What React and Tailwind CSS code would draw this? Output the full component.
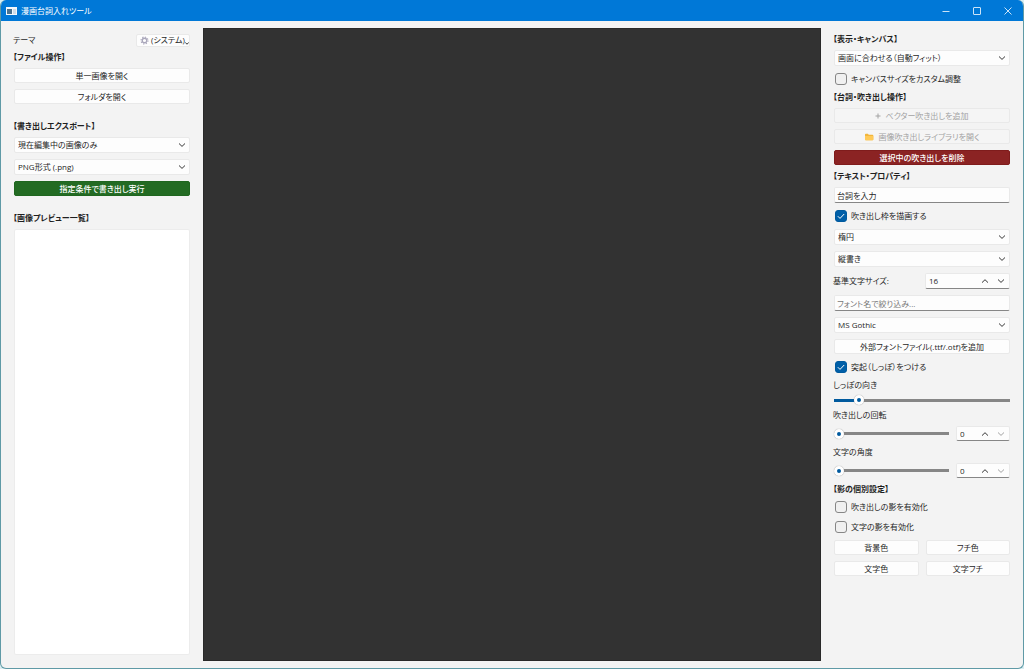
import { useState } from "react";

const control = "w-full rounded-[2px] border border-[#e9e9e9] bg-[#fdfdfd]";

const buttonTones = {
  plain: "border-[#e9e9e9] bg-[#fdfdfd] disabled:bg-[#f5f5f5] disabled:text-[#a3a3a3]",
  green: "border-[#1f661f] bg-[#236b23] font-medium text-white",
  red: "border-[#7f1c1c] bg-[#8b2323] font-medium text-white",
};

function Chevron({ up, className = "" }) {
  return (
    <svg viewBox="0 0 8 8" className={`h-2 w-2 ${className}`} fill="none" stroke="currentColor" strokeWidth=".9">
      <path d={up ? "M1 5.6 4 2.7l3 2.9" : "M1 2.5l3 2.9 3-2.9"} />
    </svg>
  );
}

function Heading({ children, className = "" }) {
  return <h2 className={`-ml-px h-[10px] font-bold leading-[10px] ${className}`}>{children}</h2>;
}

function Button({ children, tone = "plain", ...props }) {
  return (
    <button
      type="button"
      className={`flex h-[15px] w-full items-center justify-center gap-1 whitespace-nowrap rounded-[2px] border ${buttonTones[tone]}`}
      {...props}
    >
      {children}
    </button>
  );
}

function Select({ label, options }) {
  return (
    <div className="relative">
      <select aria-label={label} className={`${control} block h-4 appearance-none pl-[3px] pr-4 outline-none`}>
        {options.map((o) => (
          <option key={o}>{o}</option>
        ))}
      </select>
      <Chevron className="pointer-events-none absolute right-1 top-1" />
    </div>
  );
}

function TextBox(props) {
  return (
    <input
      type="text"
      className={`${control} block h-4 border-b-[#868686] px-[2px] outline-none placeholder:text-[#777]`}
      {...props}
    />
  );
}

function Check({ label, initial = false }) {
  const [checked, setChecked] = useState(initial);
  return (
    <label className="flex h-[14px] items-center gap-1">
      <span className="grid h-3 w-[13px] place-items-center">
        <input
          type="checkbox"
          checked={checked}
          onChange={(e) => setChecked(e.target.checked)}
          className="col-start-1 row-start-1 h-3 w-3 appearance-none rounded-[3px] border border-[#868686] bg-[#f0f0f0] checked:border-[#005a9e] checked:bg-[#005fa8]"
        />
        {checked && (
          <svg viewBox="0 0 12 12" className="pointer-events-none col-start-1 row-start-1 h-3 w-3" fill="none" stroke="#fff">
            <path d="M2.8 6.2 5 8.4 9.2 4" />
          </svg>
        )}
      </span>
      {label}
    </label>
  );
}

function Spin({ id, label, value, onChange, min = 0, max = 360, className = "" }) {
  const step = (d) => onChange(Math.min(max, Math.max(min, value + d)));
  return (
    <div className={`flex h-full items-center rounded-[2px] border border-[#e9e9e9] border-b-[#868686] bg-[#fdfdfd] ${className}`}>
      <input
        id={id}
        aria-label={label}
        type="number"
        min={min}
        max={max}
        value={value}
        onChange={(e) => onChange(Number(e.target.value))}
        className="w-0 min-w-0 flex-1 appearance-none pl-[3px] outline-none [appearance:textfield] [&::-webkit-inner-spin-button]:appearance-none"
      />
      <button type="button" aria-label="増やす" className="flex w-4 justify-center" onClick={() => step(1)}>
        <Chevron up />
      </button>
      <button
        type="button"
        aria-label="減らす"
        disabled={value <= min}
        className="flex w-4 justify-center disabled:text-[#999]"
        onClick={() => step(-1)}
      >
        <Chevron />
      </button>
    </div>
  );
}

function Slider({ id, value, onChange }) {
  const pct = (value / 360) * 100;
  return (
    <input
      id={id}
      type="range"
      min="0"
      max="360"
      value={value}
      onChange={(e) => onChange(Number(e.target.value))}
      style={{ backgroundImage: `linear-gradient(to right, #005a9e ${pct}%, #868686 ${pct}%)` }}
      className="block h-2 w-full min-w-0 flex-1 appearance-none bg-[length:100%_3px] bg-center bg-no-repeat outline-none [&::-webkit-slider-thumb]:h-[10px] [&::-webkit-slider-thumb]:w-[10px] [&::-webkit-slider-thumb]:appearance-none [&::-webkit-slider-thumb]:rounded-full [&::-webkit-slider-thumb]:border-[3px] [&::-webkit-slider-thumb]:border-white [&::-webkit-slider-thumb]:bg-[#005a9e] [&::-webkit-slider-thumb]:shadow-[0_0_1px_#888]"
    />
  );
}

function AngleRow({ id, label }) {
  const [value, setValue] = useState(0);
  return (
    <>
      <label htmlFor={id} className="-ml-px h-[10px] leading-[10px]">{label}</label>
      <div className="flex h-[15px] items-center gap-[7px]">
        <Slider id={id} value={value} onChange={setValue} />
        <Spin label={label} value={value} onChange={setValue} className="w-[54px]" />
      </div>
    </>
  );
}

function TitleBar() {
  return (
    <header className="flex h-[21px] shrink-0 items-center bg-[#0078d7] pl-[5px] text-white">
      <svg viewBox="0 0 11 10" className="mr-1 h-[10px] w-[11px]">
        <path d="M0 1h11v8H0z" fill="#f4f8fb" />
        <path d="M1 3h5v5H1z" fill="#4b7390" />
        <path d="M7 3h3v5H7z" fill="#cfdde8" />
      </svg>
      <h1 className="flex-1">漫画台詞入れツール</h1>
      <button type="button" aria-label="最小化" className="flex h-full w-[31px] items-center justify-center">
        <svg viewBox="0 0 8 8" className="h-2 w-2" stroke="#fff" strokeWidth=".8"><path d="M.5 4.5h7" /></svg>
      </button>
      <button type="button" aria-label="最大化" className="flex h-full w-[31px] items-center justify-center">
        <svg viewBox="0 0 8 8" className="h-2 w-2" fill="none" stroke="#fff" strokeWidth=".8"><rect x=".5" y=".5" width="7" height="7" rx=".5" /></svg>
      </button>
      <button type="button" aria-label="閉じる" className="flex h-full w-[31px] items-center justify-center">
        <svg viewBox="0 0 8 8" className="h-2 w-2" stroke="#fff" strokeWidth=".8"><path d="M.5.5l7 7M7.5.5l-7 7" /></svg>
      </button>
    </header>
  );
}

function LeftPanel() {
  return (
    <aside className="flex w-[202px] shrink-0 flex-col gap-[6px] px-[13px] pb-[13px] pt-[13px]">
      <div className="flex h-3 items-center justify-between">
        <span className="-ml-px">テーマ</span>
        <button type="button" className="flex h-[13px] w-[54px] items-center rounded-[2px] border border-[#e9e9e9] bg-[#fdfdfd] pl-[3px]">
          <svg viewBox="0 0 10 10" className="mr-[2px] h-[9px] w-[9px] shrink-0" fill="none" stroke="#aaa7bb">
            <circle cx="5" cy="5" r="2.5" strokeWidth="1.5" />
            <circle cx="5" cy="5" r="3.9" strokeWidth="1.2" strokeDasharray="1.5 1.56" />
          </svg>
          <span className="whitespace-nowrap">(システム)</span>
          <svg viewBox="0 0 4 3" className="mt-[6px] h-[3px] w-1 shrink-0" fill="none" stroke="#333"><path d="M.3.6 2 2.2 3.7.6" /></svg>
        </button>
      </div>
      <Heading>【ファイル操作】</Heading>
      <Button>単一画像を開く</Button>
      <Button>フォルダを開く</Button>

      <Heading className="mt-[11px]">【書き出しエクスポート】</Heading>
      <Select label="書き出し対象" options={["現在編集中の画像のみ", "すべての画像"]} />
      <Select label="形式" options={["PNG形式 (.png)", "JPEG形式 (.jpg)"]} />
      <Button tone="green">指定条件で書き出し実行</Button>

      <Heading className="mt-[11px]">【画像プレビュー一覧】</Heading>
      <ul className="min-h-0 flex-1 rounded-[2px] border border-[#ececec] bg-white" />
    </aside>
  );
}

function RightPanel() {
  const [size, setSize] = useState(16);
  const [tail, setTail] = useState(43);

  return (
    <aside className="flex w-[202px] shrink-0 flex-col gap-[6px] px-[13px] pb-[13px] pt-[13px]">
      <Heading>【表示・キャンバス】</Heading>
      <Select label="表示倍率" options={["画面に合わせる（自動フィット）", "100%"]} />
      <Check label="キャンバスサイズをカスタム調整" />

      <Heading>【台詞・吹き出し操作】</Heading>
      <Button disabled>
        <svg viewBox="0 0 6 6" className="h-[6px] w-[6px]" stroke="currentColor"><path d="M3 .5v5M.5 3h5" /></svg>
        ベクター吹き出しを追加
      </Button>
      <Button disabled>
        <svg viewBox="0 0 10 8" className="h-2 w-[10px]">
          <path d="M1 1.5Q1 .7 1.8.7h2l1 1h3.7q.8 0 .8.8v4q0 .8-.8.8H1.8Q1 7.3 1 6.5z" fill="#f2b63c" />
          <path d="M1 3h8.3v3.5q0 .8-.8.8H1.8Q1 7.3 1 6.5z" fill="#ffca58" />
        </svg>
        画像吹き出しライブラリを開く
      </Button>
      <Button tone="red">選択中の吹き出しを削除</Button>

      <Heading>【テキスト・プロパティ】</Heading>
      <TextBox aria-label="台詞" defaultValue="台詞を入力" />
      <Check label="吹き出し枠を描画する" initial />
      <Select label="形状" options={["楕円", "四角"]} />
      <Select label="文字方向" options={["縦書き", "横書き"]} />
      <div className="flex h-4 items-center justify-between">
        <label htmlFor="font-size" className="-ml-px">基準文字サイズ:</label>
        <Spin id="font-size" value={size} onChange={setSize} min={1} className="w-[85px]" />
      </div>
      <TextBox aria-label="フォント名" placeholder="フォント名で絞り込み..." />
      <Select label="フォント" options={["MS Gothic", "Meiryo"]} />
      <Button>外部フォントファイル(.ttf/.otf)を追加</Button>
      <Check label="突起（しっぽ）をつける" initial />
      <label htmlFor="tail" className="-ml-px h-[10px] leading-[10px]">しっぽの向き</label>
      <div className="flex h-2 items-center">
        <Slider id="tail" value={tail} onChange={setTail} />
      </div>
      <AngleRow id="balloon-angle" label="吹き出しの回転" />
      <AngleRow id="text-angle" label="文字の角度" />

      <Heading>【影の個別設定】</Heading>
      <Check label="吹き出しの影を有効化" />
      <Check label="文字の影を有効化" />
      <div className="grid grid-cols-2 gap-x-[7px] gap-y-[6px]">
        <Button>背景色</Button>
        <Button>フチ色</Button>
        <Button>文字色</Button>
        <Button>文字フチ</Button>
      </div>
    </aside>
  );
}

export default function App() {
  return (
    <div className="h-screen bg-[#d9eef2]">
      <div
        lang="ja"
        className="flex h-full min-h-[600px] flex-col overflow-hidden rounded-md border border-t-0 border-[#5f9aa6] bg-[#f3f3f3] font-['Open_Sans','Noto_Sans_CJK_JP',sans-serif] text-[8px] leading-[10px] text-[#1f1f1f] [font-feature-settings:'palt']"
      >
        <TitleBar />
        <div className="flex min-h-0 flex-1">
          <LeftPanel />
          <main className="min-w-0 flex-1 pb-[7px] pt-[7px]">
            <div className="h-full border border-[#292929] bg-[#323232]" />
          </main>
          <RightPanel />
        </div>
      </div>
    </div>
  );
}
